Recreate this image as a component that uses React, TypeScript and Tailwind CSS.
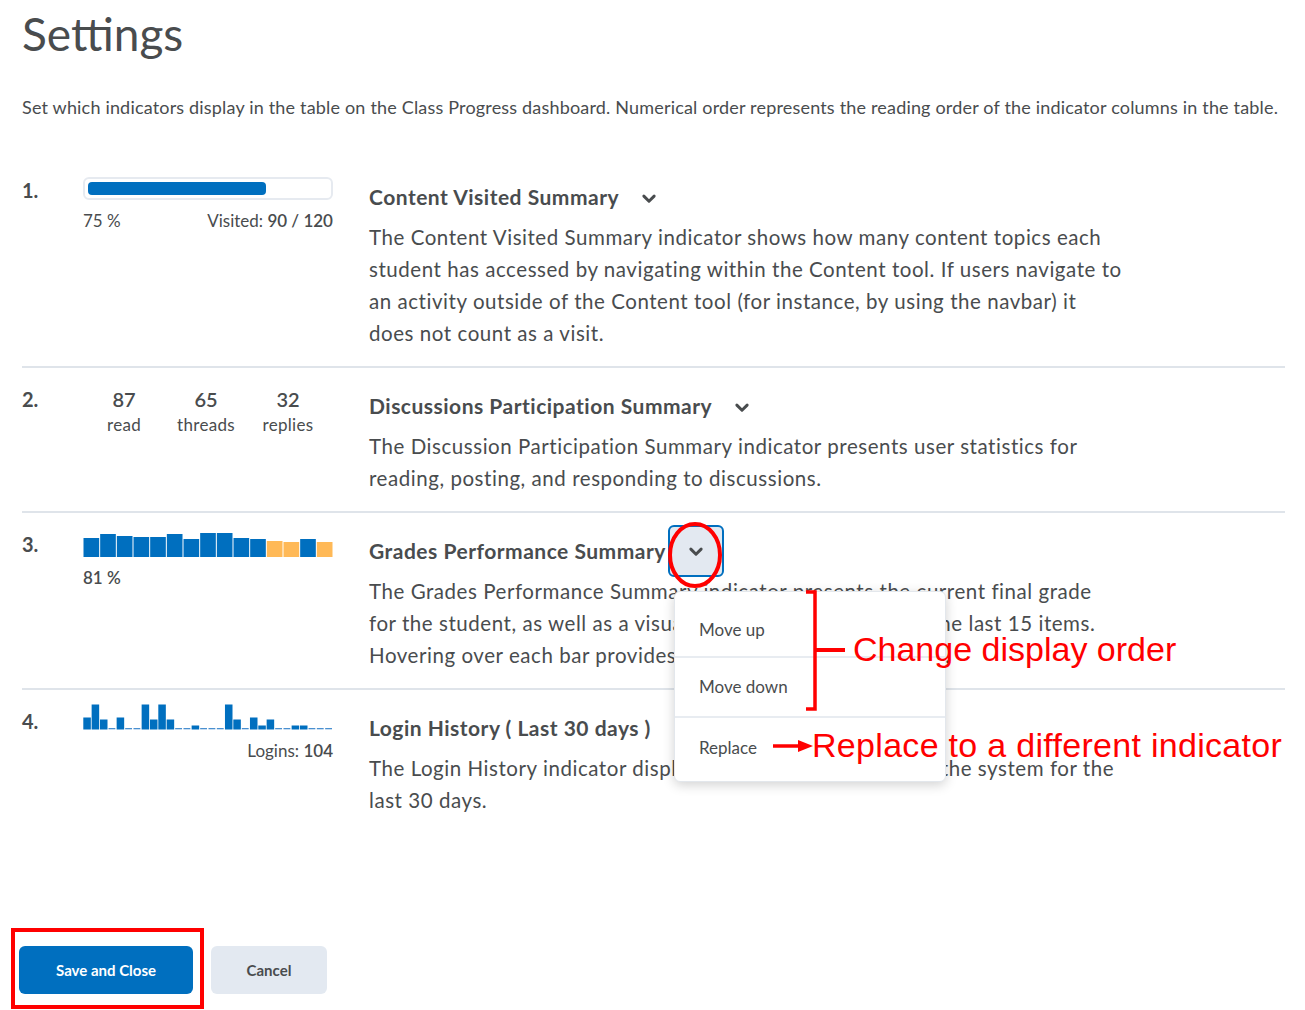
import React from "react";

const gradeBars: { h: number; c: string }[] = [
  { h: 19, c: "#006fbf" },
  { h: 23, c: "#006fbf" },
  { h: 21, c: "#006fbf" },
  { h: 20, c: "#006fbf" },
  { h: 20, c: "#006fbf" },
  { h: 23, c: "#006fbf" },
  { h: 18, c: "#006fbf" },
  { h: 24, c: "#006fbf" },
  { h: 24, c: "#006fbf" },
  { h: 19, c: "#006fbf" },
  { h: 18, c: "#006fbf" },
  { h: 16, c: "#ffb957" },
  { h: 15, c: "#ffb957" },
  { h: 18, c: "#006fbf" },
  { h: 15, c: "#ffb957" },
];

// 0 = empty day (thin dash)
const logins = [12, 25, 10, 0, 12, 0, 0, 25, 10, 25, 10, 0, 0, 4, 0, 0, 0, 25, 10, 0, 12, 4, 10, 0, 0, 4, 4, 0, 0, 0];

function Chevron({ className = "" }: { className?: string }) {
  return (
    <svg viewBox="0 0 14 10" className={className} fill="none" stroke="#494c4e" strokeWidth="2.6" strokeLinecap="round" strokeLinejoin="round">
      <path d="M2.5 2.5 L7 7 L11.5 2.5" />
    </svg>
  );
}

function GradesChart() {
  const w = 250 / 15;
  return (
    <svg width="250" height="26" viewBox="0 0 250 26">
      {gradeBars.map((b, i) => (
        <rect key={i} x={i * w + 0.5} y={26 - b.h} width={w - 1} height={b.h} fill={b.c} />
      ))}
    </svg>
  );
}

function LoginChart() {
  const w = 250 / 30;
  return (
    <svg width="250" height="27" viewBox="0 0 250 27">
      {logins.map((h, i) =>
        h === 0 ? (
          <rect key={i} x={i * w + 0.5} y={25} width={w - 1.5} height={1.3} fill="#4a90d0" />
        ) : (
          <rect key={i} x={i * w + 0.3} y={26.5 - h} width={w - 0.8} height={h} fill="#006fbf" />
        )
      )}
    </svg>
  );
}

function Row({
  num,
  visual,
  title,
  active,
  children,
  last,
}: {
  num: string;
  visual: React.ReactNode;
  title: string;
  active?: boolean;
  children: React.ReactNode;
  last?: boolean;
}) {
  return (
    <div className={`grid grid-cols-[61px_250px_1fr] pt-[16px] pb-[17px] ${last ? "" : "border-b-2 border-[#dfe4ea]"}`}>
      <div className="text-[20px] font-bold leading-[28px] text-[#494c4e] pt-[1px]">{num}</div>
      <div className="pt-[2px]">{visual}</div>
      <div className="pl-[36px]">
        <div className="flex items-center h-[44px]">
          <h3 className="text-[21px] font-bold text-[#494c4e] leading-[28px] tracking-[0.5px]">{title}</h3>
          {active ? (
            <button className="ml-[2px] w-[56px] h-[52px] shrink-0 rounded-[6px] border-2 border-[#006fbf] bg-[#e3e9f1] flex items-center justify-center">
              <Chevron className="w-[16px] h-[12px] mt-[2px]" />
            </button>
          ) : (
            <button className="ml-[2px] w-[56px] h-[44px] shrink-0 flex items-center justify-center">
              <Chevron className="w-[16px] h-[12px] mt-[4px]" />
            </button>
          )}
        </div>
        <p className="mt-[2px] w-[753px] text-[20.5px] leading-[32px] tracking-[0.55px] text-[#494c4e]">{children}</p>
      </div>
    </div>
  );
}

export default function App() {
  return (
    <div className="relative w-[1305px] h-[1010px] overflow-hidden bg-white font-['Lato',sans-serif] text-[#494c4e]">
      <div className="pl-[22px] pr-[20px]">
        <h1 className="text-[46px] leading-[54px] pt-[7px] font-normal text-[#494c4e]">Settings</h1>
        <p className="mt-[34px] text-[18px] leading-[24px] tracking-[0.18px] whitespace-nowrap">
          Set which indicators display in the table on the Class Progress dashboard. Numerical order represents the reading order of the indicator columns in the table.
        </p>

        <div className="mt-[40px]">
          <Row
            num="1."
            title="Content Visited Summary"
            visual={
              <div>
                <div className="h-[23px] rounded-[6px] border-2 border-[#e6eaf0] p-[3px]">
                  <div className="h-full w-[74%] rounded-[4px] bg-[#006fbf]" />
                </div>
                <div className="flex justify-between mt-[10px] text-[17px] leading-[22px]">
                  <span>75 %</span>
                  <span>
                    Visited: <b className="font-semibold">90 / 120</b>
                  </span>
                </div>
              </div>
            }
          >
            The Content Visited Summary indicator shows how many content topics each student has accessed by navigating within the Content tool. If users navigate to an activity outside of the Content tool (for instance, by using the navbar) it does not count as a visit.
          </Row>

          <Row
            num="2."
            title="Discussions Participation Summary"
            visual={
              <div className="flex">
                {[
                  ["87", "read"],
                  ["65", "threads"],
                  ["32", "replies"],
                ].map(([n, l]) => (
                  <div key={l} className="w-[82px] text-center">
                    <div className="text-[20px] font-semibold leading-[26px]">{n}</div>
                    <div className="text-[17px] leading-[26px] tracking-[0.3px]">{l}</div>
                  </div>
                ))}
              </div>
            }
          >
            The Discussion Participation Summary indicator presents user statistics for reading, posting, and responding to discussions.
          </Row>

          <Row
            num="3."
            title="Grades Performance Summary"
            active
            visual={
              <div>
                <GradesChart />
                <div className="mt-[10px] text-[17px] leading-[22px] font-semibold">81 %</div>
              </div>
            }
          >
            The Grades Performance Summary indicator presents the current final grade for the student, as well as a visualization of their grades on the last 15 items. Hovering over each bar provides more information on grades.
          </Row>

          <Row
            num="4."
            title="Login History ( Last 30 days )"
            last
            visual={
              <div className="-mt-[5px]">
                <LoginChart />
                <div className="mt-[10px] text-right text-[17px] leading-[22px]">
                  Logins: <b className="font-semibold">104</b>
                </div>
              </div>
            }
          >
            The Login History indicator displays the number of logins to the system for the last 30 days.
          </Row>
        </div>
      </div>

      <div className="absolute left-[19px] top-[946px] flex gap-[18px]">
        <button className="w-[174px] h-[48px] rounded-[6px] bg-[#006fbf] text-white text-[15px] font-bold">Save and Close</button>
        <button className="w-[116px] h-[48px] rounded-[6px] bg-[#e3e9f1] text-[#494c4e] text-[15px] font-bold">Cancel</button>
      </div>

      {/* annotation: red box around Save */}
      <div className="absolute left-[11px] top-[928px] w-[193px] h-[81px] border-[4px] border-[#ff0000]" />

      {/* dropdown menu */}
      <div className="absolute left-[674px] top-[591px] w-[272px] h-[191px] rounded-[6px] bg-white border border-[#e3e7ec] shadow-[0_3px_12px_rgba(0,0,0,0.18)] text-[17px] text-[#494c4e]">
        <div className="h-[66px] flex items-center pl-[24px] pt-[12px] border-b-2 border-[#e8ecf1]">Move up</div>
        <div className="h-[60px] flex items-center pl-[24px] border-b-2 border-[#e8ecf1]">Move down</div>
        <div className="h-[60px] flex items-center pl-[24px]">Replace</div>
      </div>

      {/* annotation overlay */}
      <svg className="absolute left-0 top-0 pointer-events-none" width="1305" height="1010" viewBox="0 0 1305 1010">
        <ellipse cx="695" cy="555" rx="25" ry="31" fill="none" stroke="#ff0000" strokeWidth="4" />
        <path d="M806 592 H815 V709 H806" fill="none" stroke="#ff0000" strokeWidth="3.5" />
        <path d="M815 650 H845" stroke="#ff0000" strokeWidth="4" />
        <path d="M773 746 H800" stroke="#ff0000" strokeWidth="3.5" />
        <path d="M798 740 L813 746 L798 752 Z" fill="#ff0000" />
      </svg>
      <div className="absolute left-[853px] top-[628px] text-[34px] leading-[42px] text-[#ff0000] font-['Liberation_Sans',sans-serif] whitespace-nowrap">
        Change display order
      </div>
      <div className="absolute left-[812px] top-[724px] text-[34px] leading-[42px] tracking-[0.3px] text-[#ff0000] font-['Liberation_Sans',sans-serif] whitespace-nowrap">
        Replace to a different indicator
      </div>
    </div>
  );
}
